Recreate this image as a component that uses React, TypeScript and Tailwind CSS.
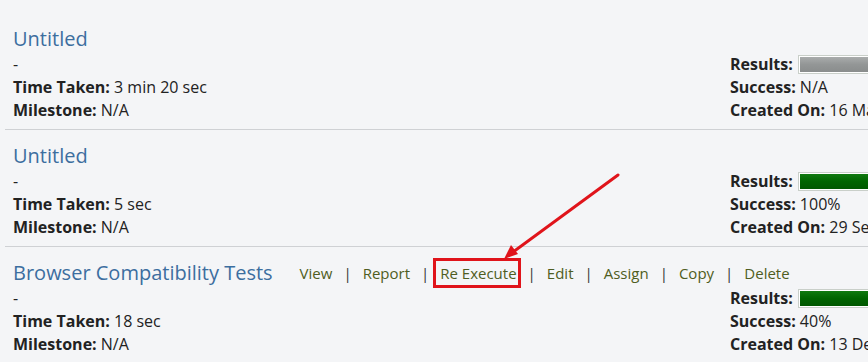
import React from 'react'

interface Run {
  title: string
  timeTaken: string
  milestone: string
  success: string
  createdOn: string
  bar: 'gray' | 'green'
  actions?: boolean
}

const runs: Run[] = [
  { title: 'Untitled', timeTaken: '3 min 20 sec', milestone: 'N/A', success: 'N/A', createdOn: '16 Mar 2015', bar: 'gray' },
  { title: 'Untitled', timeTaken: '5 sec', milestone: 'N/A', success: '100%', createdOn: '29 Sep 2015', bar: 'green' },
  { title: 'Browser Compatibility Tests', timeTaken: '18 sec', milestone: 'N/A', success: '40%', createdOn: '13 Dec 2015', bar: 'green', actions: true },
]

const actions = ['View', 'Report', 'Re Execute', 'Edit', 'Assign', 'Copy', 'Delete']

function ResultBar({ kind }: { kind: 'gray' | 'green' }) {
  return (
    <div className="ml-[5px] h-[19px] w-[120px] shrink-0 border border-[#c9cfc9] bg-white p-px">
      <div
        className={
          kind === 'gray'
            ? 'h-full w-full bg-gradient-to-b from-[#a9acac] via-[#939696] to-[#8a8d8d]'
            : 'h-full w-full bg-gradient-to-b from-[#107a10] via-[#006400] to-[#005800]'
        }
      />
    </div>
  )
}

function RunRow({ run, first }: { run: Run; first?: boolean }) {
  return (
    <div className={`ml-[5px] border-b border-[#cfd1d4] pl-[8px] pb-[7px] ${first ? 'pt-[25px]' : 'pt-[12px]'}`}>
      {/* Title + actions */}
      <div className="flex h-[28px] items-center">
        <span className="text-[20px] leading-[28px] text-[#3c6e9f]">{run.title}</span>
        {run.actions && (
          <div className="ml-[27px] flex items-center text-[15px] text-[#4f5d22]">
            {actions.map((a, i) => (
              <React.Fragment key={a}>
                {i > 0 && <span className="mx-[11px] text-[#333]">|</span>}
                {a === 'Re Execute' ? (
                  <span className="-ml-[7px] -mr-[4px] border-[3px] border-[#e0141b] pl-[4px] pr-[1px] leading-[24px]">{a}</span>
                ) : (
                  <span>{a}</span>
                )}
              </React.Fragment>
            ))}
          </div>
        )}
      </div>
      <div className="flex text-[16px] leading-[23px] text-[#222]">
        <div className="w-[717px] shrink-0">
          <div>-</div>
          <div>
            <b className="font-bold">Time Taken:</b> {run.timeTaken}
          </div>
          <div>
            <b className="font-bold">Milestone:</b> {run.milestone}
          </div>
        </div>
        <div className="whitespace-nowrap">
          <div className="flex h-[23px] items-center">
            <b className="font-bold">Results:</b>
            <ResultBar kind={run.bar} />
          </div>
          <div>
            <b className="font-bold">Success:</b> {run.success}
          </div>
          <div>
            <b className="font-bold">Created On:</b> {run.createdOn}
          </div>
        </div>
      </div>
    </div>
  )
}

export default function App() {
  return (
    <div
      className="relative h-[362px] w-[868px] overflow-hidden bg-[#f4f5f7]"
      style={{ fontFamily: '"Open Sans", "Noto Sans", sans-serif' }}
    >
      {runs.map((run, i) => (
        <RunRow key={i} run={run} first={i === 0} />
      ))}

      {/* annotation arrow */}
      <svg className="pointer-events-none absolute left-0 top-0" width="868" height="362">
        <line x1="618" y1="175" x2="509" y2="255" stroke="#e0141b" strokeWidth="3" strokeLinecap="round" />
        <polygon points="504,259 511,245 518,254" fill="#e0141b" />
      </svg>
    </div>
  )
}
